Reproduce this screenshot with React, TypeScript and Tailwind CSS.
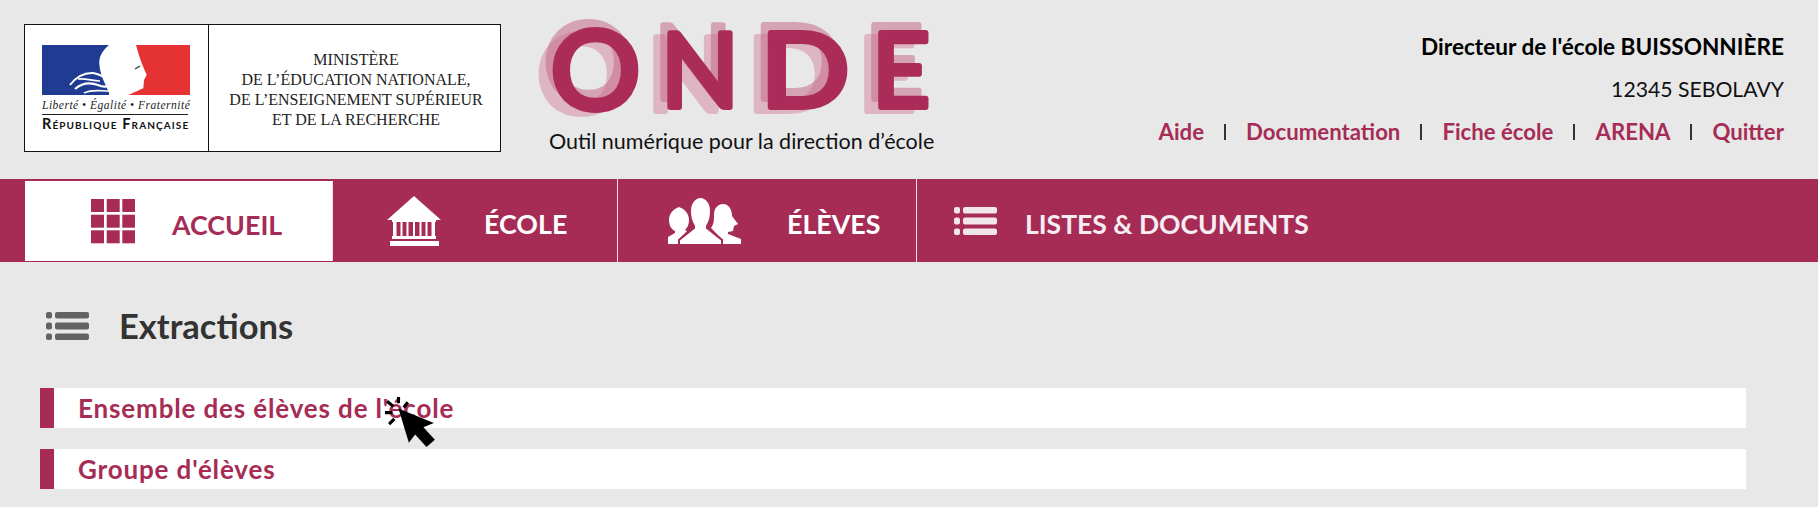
const serif = "font-['Liberation_Serif',serif]";
const lato = "font-['Lato',sans-serif]";

function ListIcon({ className }: { className: string }) {
  return (
    <svg viewBox="0 0 43 28" className={className} fill="currentColor">
      <rect x="0" y="0" width="6" height="6.5" rx="2" />
      <rect x="9" y="0" width="34" height="6.5" rx="2" />
      <rect x="0" y="10.5" width="6" height="7" rx="2" />
      <rect x="9" y="10.5" width="34" height="7" rx="2" />
      <rect x="0" y="21.5" width="6" height="6.5" rx="2" />
      <rect x="9" y="21.5" width="34" height="6.5" rx="2" />
    </svg>
  );
}

function GridIcon() {
  const cells = [0, 15.7, 31.3];
  return (
    <svg viewBox="0 0 44 45" className="w-[44px] h-[45px] text-[#a62c55]" fill="currentColor">
      {cells.map((y) =>
        cells.map((x) => <rect key={`${x}-${y}`} x={x} y={y} width="13" height="13" />)
      )}
    </svg>
  );
}

function BankIcon() {
  return (
    <svg viewBox="0 0 54 50" className="w-[54px] h-[50px] text-white" fill="currentColor">
      <path d="M27 0 L54 24 H0 Z" />
      <rect x="5" y="24" width="44" height="2" />
      <rect x="6" y="26" width="3.5" height="15" />
      <rect x="13.5" y="26" width="2" height="15" />
      <rect x="19.5" y="26" width="2" height="15" />
      <rect x="26" y="26" width="2" height="15" />
      <rect x="32.5" y="26" width="2" height="15" />
      <rect x="38.5" y="26" width="2" height="15" />
      <rect x="44.5" y="26" width="3.5" height="15" />
      <rect x="5" y="40" width="44" height="3" />
      <rect x="3" y="45" width="49" height="5" />
    </svg>
  );
}

function PeopleIcon() {
  return (
    <svg viewBox="0 0 74 46" className="w-[74px] h-[46px]">
      <path fill="#fff" d="M11 9C17 11 21 16 21 22C21 27 19 30 17 32L19 33L10 42V46H0V39L7 35V33C3 31 1 27 1 22C1 16 5 11 11 9Z" />
      <path fill="#fff" d="M55 6C61 6 64 12 64 18L70 26L66 28L65 33L60 34V36L73 41V46H55V42L43 30C46 26 46 22 46 17C46 10 50 6 55 6Z" />
      <path fill="#fff" stroke="#a62c55" strokeWidth="2" d="M32.5 -1C38 -1 43 5 43 13C43 20 41 25 39 28V30L54 42V47H11V42L26 30V28C24 25 22 20 22 13C22 5 27 -1 32.5 -1Z" />
    </svg>
  );
}

function Marianne() {
  return (
    <svg viewBox="0 0 148 50" className="w-[148px] h-[50px]">
      <rect width="67" height="50" fill="#1f3c92" />
      <path fill="#fff" d="M67 0C60 6 57 12 57.3 18.3C57.5 24 59 28 60 32L68 50H67V0Z" />
      <path fill="#e53333" d="M94 0H148V50H86.3L101.3 43.3L102 35L104.7 30L99.7 18.3L96.3 8.3Z" />
      <path fill="none" stroke="#fff" strokeWidth="2" d="M28 40C34 32 42 28 50 28C54 28 58 30 62 32" />
      <path fill="none" stroke="#fff" strokeWidth="2.2" d="M33 44C40 38 48 37 56 40C60 42 64 42 67 41" />
      <path fill="none" stroke="#fff" strokeWidth="1.6" d="M36 34C44 33 50 36 58 36" />
      <path fill="none" stroke="#fff" strokeWidth="1.6" d="M42 48C50 44 58 46 67 46" />
      <path fill="none" stroke="#666" strokeWidth="1.5" d="M93 24L98 21" />
    </svg>
  );
}

function OndeLogo() {
  // les lettres restent du vrai texte, le trait arrondit les angles
  const letters = [
    { t: "O", x: 23.5, w: 90, y: 93, size: 108 },
    { t: "N", x: 134, w: 78, y: 91, size: 102 },
    { t: "D", x: 233.5, w: 89, y: 91, size: 102 },
    { t: "E", x: 345, w: 58, y: 91, size: 102 },
  ];
  const layers = [
    { dx: -14, dy: 4, fill: "#d99aae", op: 0.65 },
    { dx: -7, dy: -8, fill: "#c56d8b", op: 0.55 },
    { dx: 0, dy: 0, fill: "#ab2c58", op: 1 },
  ];
  return (
    <svg viewBox="0 0 420 110" className="w-[420px] h-[110px] overflow-visible">
      {layers.map((l) => (
        <g key={l.dx} opacity={l.op} transform={`translate(${l.dx} ${l.dy})`}>
          {letters.map((c) => (
            <text
              key={c.t}
              x={c.x}
              y={c.y}
              textLength={c.w}
              lengthAdjust="spacingAndGlyphs"
              fontFamily="Lato, sans-serif"
              fontWeight="400"
              fontSize={c.size}
              fill={l.fill}
              stroke={l.fill}
              strokeWidth="6"
              strokeLinejoin="round"
            >
              {c.t}
            </text>
          ))}
        </g>
      ))}
    </svg>
  );
}

function NavTab({ icon, label, className }: { icon: React.ReactNode; label: string; className: string }) {
  return (
    <div className={`flex items-center h-full border-r border-[#f3dde5] ${className}`}>
      {icon}
      <span className="pt-2 text-[26.8px] font-bold text-white leading-none">{label}</span>
    </div>
  );
}

function ExtractRow({ label }: { label: string }) {
  return (
    <div className="flex h-10 bg-white">
      <div className="w-[14px] bg-[#a62c55]" />
      <span className="pl-6 text-[26px] leading-10 font-bold text-[#a62c55] tracking-[0.85px]">{label}</span>
    </div>
  );
}

export default function App() {
  return (
    <div className={`relative h-[507px] overflow-hidden bg-[#e8e8e9] ${lato}`}>
      <header className="flex h-[179px]">
        <div className="ml-6 mt-6 flex h-[128px] w-[477px] border border-[#111] bg-white">
          <div className="w-[184px] border-r border-[#111] pl-[17px] pt-5">
            <Marianne />
            <p className={`${serif} mt-[3px] w-[148px] text-center text-[11.5px] italic leading-[14px] tracking-[0.5px] text-[#222] whitespace-nowrap`}>
              Liberté • Égalité • Fraternité
            </p>
            <div className="mt-[2px] h-px w-[146px] bg-[#222]" />
            <p className="mt-[1px] w-[148px] text-[14.5px] font-bold leading-[16px] tracking-[1.1px] text-[#111] whitespace-nowrap [font-variant-caps:small-caps]">
              République Française
            </p>
          </div>
          <div className={`${serif} flex-1 pl-[3px] pt-[25px] text-center text-[16px] leading-5 text-[#222] whitespace-nowrap`}>
            <p>MINISTÈRE</p>
            <p>DE L’ÉDUCATION NATIONALE,</p>
            <p>DE L’ENSEIGNEMENT SUPÉRIEUR</p>
            <p>ET DE LA RECHERCHE</p>
          </div>
        </div>

        <div className="ml-[26px] mt-4 flex w-[420px] flex-col">
          <OndeLogo />
          <p className="ml-[22px] mt-[1px] text-[21.5px] leading-7 text-[#111] whitespace-nowrap">
            Outil numérique pour la direction d’école
          </p>
        </div>

        <div className="ml-auto mr-[34px] mt-[33px] flex flex-col items-end">
          <p className="text-[22.6px] font-bold leading-7 text-black">Directeur de l'école BUISSONNIÈRE</p>
          <p className="mt-[14px] text-[21.2px] leading-7 text-[#111]">12345 SEBOLAVY</p>
          <div className="mt-[15px] flex items-center text-[22.2px] font-bold leading-7 text-[#a62c55]">
            <span>Aide</span>
            <span className="mx-[20px] h-[16px] w-[2px] bg-[#333]" />
            <span>Documentation</span>
            <span className="mx-[20px] h-[16px] w-[2px] bg-[#333]" />
            <span>Fiche école</span>
            <span className="mx-[20px] h-[16px] w-[2px] bg-[#333]" />
            <span>ARENA</span>
            <span className="mx-[20px] h-[16px] w-[2px] bg-[#333]" />
            <span>Quitter</span>
          </div>
        </div>
      </header>

      <nav className="flex h-[83px] bg-[#a62c55] pl-[25px]">
        <div className="mt-[2px] flex h-[80px] w-[308px] items-center border-r border-[#f3dde5] bg-white pl-[66px]">
          <GridIcon />
          <span className="ml-[37px] pt-2 text-[26.8px] font-bold leading-none text-[#a62c55]">ACCUEIL</span>
        </div>
        <NavTab className="w-[285px] gap-[43px] pl-[54px]" icon={<BankIcon />} label="ÉCOLE" />
        <NavTab className="w-[299px] gap-[45px] pl-[50px]" icon={<PeopleIcon />} label="ÉLÈVES" />
        <div className="flex h-full items-center gap-[28px] pl-[37px]">
          <ListIcon className="h-7 w-[43px] text-[#f1e6ec]" />
          <span className="pt-2 text-[26.5px] font-bold leading-none text-[#f6edf2]">LISTES &amp; DOCUMENTS</span>
        </div>
      </nav>

      <main className="pl-10 pr-[72px]">
        <div className="flex h-[126px] items-start pl-[6px] pt-[50px]">
          <ListIcon className="h-7 w-[43px] text-[#626262]" />
          <h1 className="ml-[30px] text-[34.5px] font-bold leading-7 text-[#333]">Extractions</h1>
        </div>
        <div className="flex flex-col gap-[21px]">
          <ExtractRow label="Ensemble des élèves de l'école" />
          <ExtractRow label="Groupe d'élèves" />
        </div>
      </main>

      {/* curseur au clic, par dessus la ligne */}
      <svg viewBox="0 0 50 48" className="absolute left-[386px] top-[397px] h-[50px] w-[52px] overflow-visible">
        <path fill="#000" d="M12 11L46 25L36 29L47 41L39 48L28 36L22 44Z" />
        <path stroke="#000" strokeWidth="3" fill="none" d="M12 0V6M1 4L7 9M-1 15H6M3 26L8 21M21 5L17 10" />
      </svg>
    </div>
  );
}
